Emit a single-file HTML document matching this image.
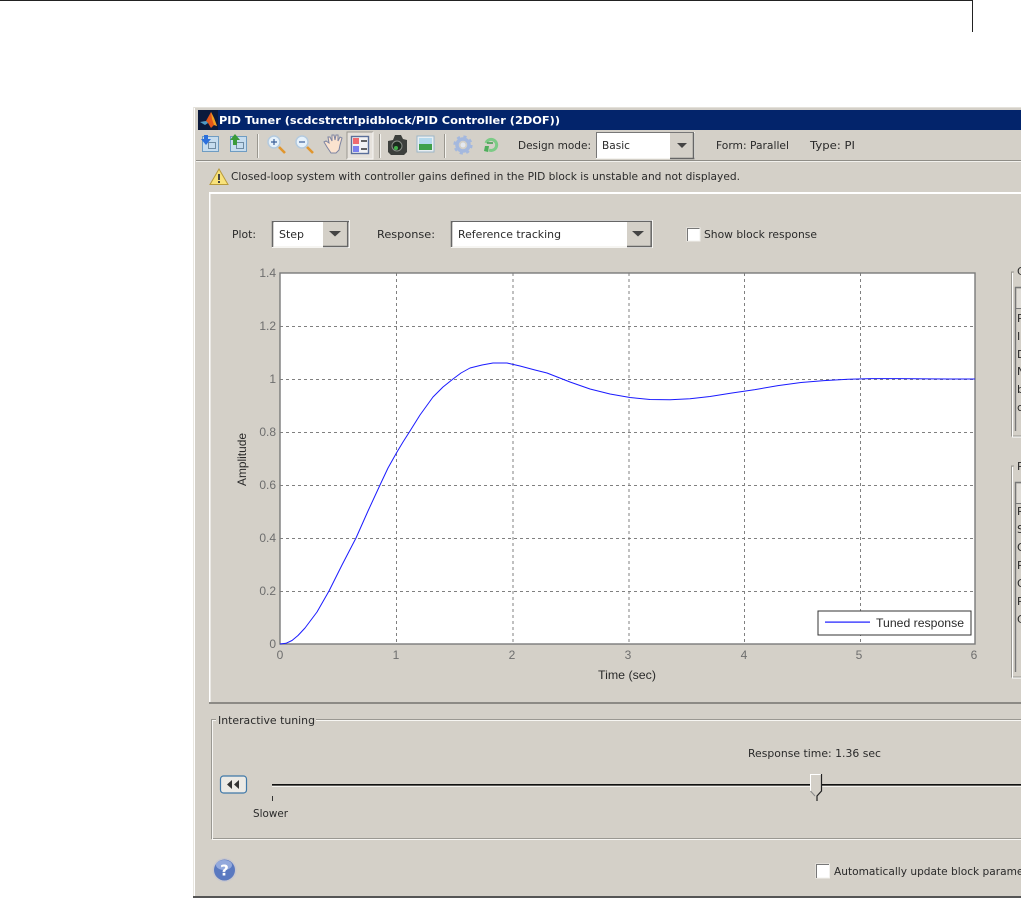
<!DOCTYPE html>
<html><head><meta charset="utf-8"><title>PID Tuner</title>
<style>html,body{margin:0;padding:0;background:#fff;overflow:hidden}svg{display:block;filter:blur(.35px)}
text{font-family:"DejaVu Sans","Liberation Sans",sans-serif;font-size:11px;fill:#2a2a2a}
.a,.t{font-family:"Liberation Sans",sans-serif;font-size:12px}
.t{fill:#6e6e6e}
</style></head><body>
<svg width="1021" height="899" viewBox="0 0 1021 899" xmlns="http://www.w3.org/2000/svg">
<rect width="1021" height="899" fill="#fff"/>
<!-- page header rule -->
<rect x="0" y="0" width="973" height="1" fill="#222"/>
<rect x="972" y="0" width="1" height="32" fill="#222"/>
<!-- window -->
<rect x="193" y="107" width="828" height="791" fill="#d4d0c8"/>
<rect x="193" y="107" width="828" height="1" fill="#e4e1da"/>
<rect x="193" y="107" width="1" height="791" fill="#e8e6e0"/>
<rect x="194" y="108" width="1" height="789" fill="#fff"/>
<rect x="193" y="896" width="828" height="2" fill="#555"/>
<rect x="198" y="110" width="823" height="20" fill="#03246b"/>
<!-- logo -->
<rect x="198" y="110" width="20" height="20" fill="#0b1a3c"/>
<path d="M200 122l6-1 5-9 3 6 3 8-3-1-3 3-3-5-3-2z" fill="#e2551a"/>
<path d="M200 122l6-1 2 2-3 2z" fill="#4f9ac4"/>
<path d="M211 112l3 6 3 8-3-1-2-6z" fill="#f0a020"/>
<text x="219" y="124" style="fill:#fff;font-weight:bold" textLength="341" lengthAdjust="spacingAndGlyphs">PID Tuner (scdcstrctrlpidblock/PID Controller (2DOF))</text>

<!-- toolbar icons -->
<g>
<rect x="202.500" y="136.500" width="16" height="15" fill="#c6dcee" stroke="#6f9cc2"/>
<rect x="208.500" y="142.500" width="7" height="6" fill="none" stroke="#6f8ba2"/>
<path d="M204 135h4v4h3l-5 6-5-6h3z" fill="#2c70dc"/>
<rect x="230.500" y="136.500" width="16" height="15" fill="#c6dcee" stroke="#6f9cc2"/>
<rect x="236.500" y="142.500" width="7" height="6" fill="none" stroke="#6f8ba2"/>
<path d="M235 134l5 6h-3v5h-4v-5h-3z" fill="#3a9a3a"/>
<rect x="257" y="134" width="1" height="24" fill="#9a978f"/><rect x="258" y="134" width="1" height="24" fill="#f4f3ef"/>
<!-- zoom in -->
<circle cx="274" cy="142" r="6" fill="#e6f1fa" stroke="#b4cade" stroke-width="1.500"/>
<path d="M271 142h6M274 139v6" stroke="#3b5f9a" stroke-width="1.200"/>
<path d="M279 147l6 6" stroke="#e0962e" stroke-width="2.600"/>
<!-- zoom out -->
<circle cx="302" cy="142" r="6" fill="#e6f1fa" stroke="#b4cade" stroke-width="1.500"/>
<path d="M299 142h6" stroke="#3b5f9a" stroke-width="1.200"/>
<path d="M307 147l6 6" stroke="#e0962e" stroke-width="2.600"/>
<!-- hand -->
<path d="M327 147l-3-5 2-1 3 2-1-6 2 0 2 4 0-6h2l1 5 1-5h2l0 6 2-4 2 1-2 7-1 5-3 3h-5z" fill="#fbe3cf" stroke="#7d84a2" stroke-width="1"/>
<!-- toggled button -->
<rect x="347" y="132" width="26" height="27" fill="#e6e2dc"/>
<path d="M347 159V132H373" fill="none" stroke="#9a978f"/><path d="M373 132V159H347" fill="none" stroke="#f7f6f3"/>
<rect x="351.500" y="136.500" width="17" height="17" fill="#f2f2f4" stroke="#5a6f9a" stroke-width="1.400"/>
<rect x="353" y="138" width="6" height="6" fill="#ee6a70"/><rect x="353" y="146" width="6" height="6" fill="#7a80ee"/>
<path d="M361 141h6M361 149h6" stroke="#333" stroke-width="1.400"/>
<rect x="379" y="134" width="1" height="24" fill="#9a978f"/><rect x="380" y="134" width="1" height="24" fill="#f4f3ef"/>
<!-- camera -->
<path d="M388 141l5-1 2-5h6l2 4 4 1v12l-3 3h-13l-3-3z" fill="#3c3f3c"/>
<circle cx="397" cy="146" r="5" fill="#1e2a20" stroke="#8a8e88"/>
<circle cx="396" cy="148" r="2" fill="#43b04a"/>
<!-- landscape -->
<rect x="417" y="136" width="17" height="16" fill="#e8eef2" stroke="#9cb6c8"/>
<rect x="419" y="138" width="13" height="6" fill="#b4d8ec"/><rect x="419" y="144" width="13" height="6" fill="#3fa04a"/>
<rect x="444" y="134" width="1" height="24" fill="#9a978f"/><rect x="445" y="134" width="1" height="24" fill="#f4f3ef"/>
<!-- gear -->
<circle cx="463" cy="145" r="6" fill="none" stroke="#a4b8de" stroke-width="3.500"/>
<circle cx="463" cy="145" r="8.500" fill="none" stroke="#a4b8de" stroke-width="2.200" stroke-dasharray="3.200 3.500"/>
<circle cx="463" cy="145" r="2.500" fill="#e4e8f0"/>
<!-- green -->
<path d="M486 143a5.500 5.500 0 1 1 3 7" fill="none" stroke="#7ccb86" stroke-width="3"/>
<path d="M485 146l4 0-1 6-4-1z" fill="#4fae5c"/>
<path d="M487 143h6" stroke="#3e9a4c" stroke-width="1.500"/>
</g>

<text x="518" y="149" textLength="73" lengthAdjust="spacingAndGlyphs">Design mode:</text>
<!-- design combo -->
<rect x="596" y="132" width="99" height="27" fill="#f4f3ef"/>
<path d="M596.500 158V132.500H694" fill="none" stroke="#777"/>
<rect x="597" y="133" width="73" height="25" fill="#fff"/>
<rect x="670" y="133" width="24" height="25" fill="#d4d0c8"/>
<path d="M670 158.500h24.500M693.500 133v26" stroke="#666" stroke-width="1.500"/>
<path d="M677 143h10l-5 5z" fill="#444"/>
<text x="602" y="149" textLength="28" lengthAdjust="spacingAndGlyphs">Basic</text>
<text x="716" y="149" textLength="73" lengthAdjust="spacingAndGlyphs">Form: Parallel</text>
<text x="810" y="149" textLength="45" lengthAdjust="spacingAndGlyphs">Type: PI</text>
<rect x="196" y="160" width="825" height="1" fill="#8f8d87"/>
<rect x="196" y="161" width="825" height="1" fill="#f2f1ed"/>

<!-- warning -->
<path d="M219 169l9 15.500h-18z" fill="#f8e27a" stroke="#b89a3a"/>
<rect x="218" y="174" width="2" height="6" fill="#444"/><rect x="218" y="181" width="2" height="2" fill="#444"/>
<text x="231" y="180" textLength="509" lengthAdjust="spacingAndGlyphs">Closed-loop system with controller gains defined in the PID block is unstable and not displayed.</text>

<!-- main panel -->
<rect x="209" y="192" width="812" height="2" fill="#fff"/>
<rect x="209" y="192" width="1.500" height="511" fill="#fff"/>
<rect x="209" y="702" width="812" height="2" fill="#8c8a85"/>

<text x="232" y="238" textLength="24" lengthAdjust="spacingAndGlyphs">Plot:</text>
<rect x="272" y="220" width="78" height="28" fill="#f6f5f2"/>
<path d="M272.500 247V221.500H349" fill="none" stroke="#666" stroke-width="1.500"/>
<rect x="274" y="222" width="49" height="24" fill="#fff"/>
<rect x="323" y="222" width="25" height="24" fill="#d4d0c8"/>
<path d="M323 246.500h25M347.700 222v25" stroke="#666" stroke-width="1.500"/>
<path d="M329 231h12l-6 5.500z" fill="#444"/>
<text x="279" y="238" textLength="25" lengthAdjust="spacingAndGlyphs">Step</text>

<text x="377" y="238" textLength="58" lengthAdjust="spacingAndGlyphs">Response:</text>
<rect x="451" y="220" width="202" height="28" fill="#f6f5f2"/>
<path d="M451.500 247V221.500H652" fill="none" stroke="#666" stroke-width="1.500"/>
<rect x="453" y="222" width="174" height="24" fill="#fff"/>
<rect x="627" y="222" width="25" height="24" fill="#d4d0c8"/>
<path d="M627 246.500h25M651.200 222v25" stroke="#666" stroke-width="1.500"/>
<path d="M632 231h12l-6 5.500z" fill="#444"/>
<text x="458" y="238" textLength="103" lengthAdjust="spacingAndGlyphs">Reference tracking</text>

<rect x="687" y="228" width="13" height="13" fill="#fff" stroke="#f2f1ed"/>
<path d="M687.500 241V228.500H699.500" fill="none" stroke="#777"/>
<text x="704" y="238" textLength="113" lengthAdjust="spacingAndGlyphs">Show block response</text>

<!-- plot -->
<rect x="280" y="273" width="695" height="371" fill="#fff"/>
<g stroke="#808080" stroke-width="1" stroke-dasharray="3 3" fill="none">
<path d="M280 326.500H975M280 379.500H975M280 432.500H975M280 485.500H975M280 538.500H975M280 591.500H975"/>
<path d="M396.500 273V644M513 273V644M629 273V644M744.500 273V644M860.500 273V644"/>
</g>
<rect x="280" y="273" width="695" height="371" fill="none" stroke="#7a7a7a" stroke-width="1.400"/>
<polyline fill="none" stroke="#1a1aff" stroke-width="1" stroke-linejoin="round" points="280,644 286,643.300 292,640.500 298,635.500 305,628 317,612 329,591 342,565 356,538 368,511 380,485 388,468 397,452 403,442 410,431 420,415 433,397 443,387 453,379 461,373 470,368 482,365 493,363 507,363 520,366 535,370 547,373 570,382 590,389 610,394 630,397.500 650,399.500 670,399.800 690,398.800 710,396.500 732,393 755,389.600 778,385.600 801,382.500 824,380.600 848,379.300 871,378.600 900,378.600 929,378.900 950,379 975,379"/>
<text class="t" text-anchor="end" x="276" y="277">1.4</text><text class="t" text-anchor="end" x="276" y="330">1.2</text><text class="t" text-anchor="end" x="276" y="383">1</text><text class="t" text-anchor="end" x="276" y="436">0.8</text><text class="t" text-anchor="end" x="276" y="489">0.6</text><text class="t" text-anchor="end" x="276" y="542">0.4</text><text class="t" text-anchor="end" x="276" y="595">0.2</text><text class="t" text-anchor="end" x="276" y="648">0</text>
<text class="t" text-anchor="middle" x="280" y="659">0</text><text class="t" text-anchor="middle" x="396" y="659">1</text><text class="t" text-anchor="middle" x="512" y="659">2</text><text class="t" text-anchor="middle" x="628" y="659">3</text><text class="t" text-anchor="middle" x="744" y="659">4</text><text class="t" text-anchor="middle" x="859" y="659">5</text><text class="t" text-anchor="middle" x="974" y="659">6</text>
<text class="a" x="598" y="679" textLength="58" lengthAdjust="spacingAndGlyphs">Time (sec)</text>
<text class="a" transform="translate(246 486) rotate(-90)" textLength="53" lengthAdjust="spacingAndGlyphs">Amplitude</text>
<!-- legend -->
<rect x="818" y="611" width="153" height="24" fill="#fff" stroke="#333" stroke-width="1"/>
<rect x="825" y="621.500" width="45" height="1.200" fill="#1a1aff"/>
<text class="a" x="876" y="627" textLength="88" lengthAdjust="spacingAndGlyphs">Tuned response</text>

<!-- right groups -->
<path d="M1021 272H1011.500V436H1021" fill="none" stroke="#9a9892"/>
<path d="M1012.500 273V437H1021" fill="none" stroke="#fff"/>
<rect x="1014" y="266" width="8" height="12" fill="#d4d0c8"/>
<text x="1017" y="275">Controller parameters</text>
<rect x="1015" y="287" width="6" height="144" fill="#d4d0c8"/>
<path d="M1015.500 431V287.500H1021" fill="none" stroke="#777" stroke-width="1.400"/>
<rect x="1017" y="289" width="4" height="19" fill="#e0ddd7"/>
<rect x="1017" y="309" width="4" height="120" fill="#d4d0c8"/>
<rect x="1016" y="308" width="5" height="1" fill="#777"/>
<text x="1017" y="322">P</text><text x="1017" y="340">I</text><text x="1017" y="358">D</text><text x="1017" y="375">N</text><text x="1017" y="393">b</text><text x="1017" y="411">c</text>

<path d="M1021 466H1011.500V677H1021" fill="none" stroke="#9a9892"/>
<path d="M1012.500 467V678H1021" fill="none" stroke="#fff"/>
<rect x="1014" y="460" width="8" height="12" fill="#d4d0c8"/>
<text x="1017" y="470">Performance and robustness</text>
<path d="M1015.500 672V482.500H1021" fill="none" stroke="#777" stroke-width="1.400"/>
<rect x="1017" y="484" width="4" height="19" fill="#e0ddd7"/>
<rect x="1016" y="503" width="5" height="1" fill="#777"/>
<text x="1017" y="515">Rise time</text><text x="1017" y="533">Settling time</text><text x="1017" y="551">Overshoot</text><text x="1017" y="569">Peak</text><text x="1017" y="587">Gain margin</text><text x="1017" y="605">Phase margin</text><text x="1017" y="623">Closed-loop stability</text>

<!-- interactive tuning -->
<path d="M1021 719.500H211.500V838.500H1021" fill="none" stroke="#9a9892"/>
<path d="M212.500 720.500V839.500H1021M212 720.500H1021" fill="none" stroke="#f7f6f3"/>
<rect x="216" y="714" width="100" height="12" fill="#d4d0c8"/>
<text x="218" y="724" textLength="97" lengthAdjust="spacingAndGlyphs">Interactive tuning</text>
<text x="748" y="757" textLength="133" lengthAdjust="spacingAndGlyphs">Response time: 1.36 sec</text>

<rect x="220.500" y="776" width="26" height="17" rx="3" fill="#eceae5" stroke="#3f78a8" stroke-width="1.200"/>
<path d="M232 780v9l-5-4.500zM239 780v9l-5-4.500z" fill="#333"/>

<rect x="272" y="784" width="749" height="1.600" fill="#111"/>
<rect x="272" y="786" width="749" height="1" fill="#f4f3ef"/>
<rect x="272" y="796" width="1" height="5" fill="#333"/>
<text x="253" y="817" textLength="35" lengthAdjust="spacingAndGlyphs">Slower</text>
<!-- thumb -->
<path d="M810.500 774.500H821.500V791L816 797.500L810.500 791Z" fill="#d4d0c8"/>
<path d="M810.500 791V774.500H821" fill="none" stroke="#fff"/>
<path d="M821.500 774V791L817 796V801" fill="none" stroke="#222" stroke-width="1.200"/>
<path d="M810.500 791L815 796" fill="none" stroke="#888"/>

<!-- help -->
<circle cx="224.500" cy="870" r="12" fill="#c9c8ce"/>
<circle cx="224.500" cy="870" r="10.500" fill="#5a79c0"/>
<ellipse cx="224" cy="865" rx="8" ry="5" fill="#93a9dc"/>
<text x="224.500" y="875.500" text-anchor="middle" style="fill:#fff;font-weight:bold;font-size:15px">?</text>

<rect x="816" y="864" width="13.500" height="14" fill="#fff" stroke="#f2f1ed"/>
<path d="M816.500 878V864.500H829" fill="none" stroke="#777"/>
<text x="834" y="875" textLength="210" lengthAdjust="spacingAndGlyphs">Automatically update block parameters</text>
</svg>
</body></html>
